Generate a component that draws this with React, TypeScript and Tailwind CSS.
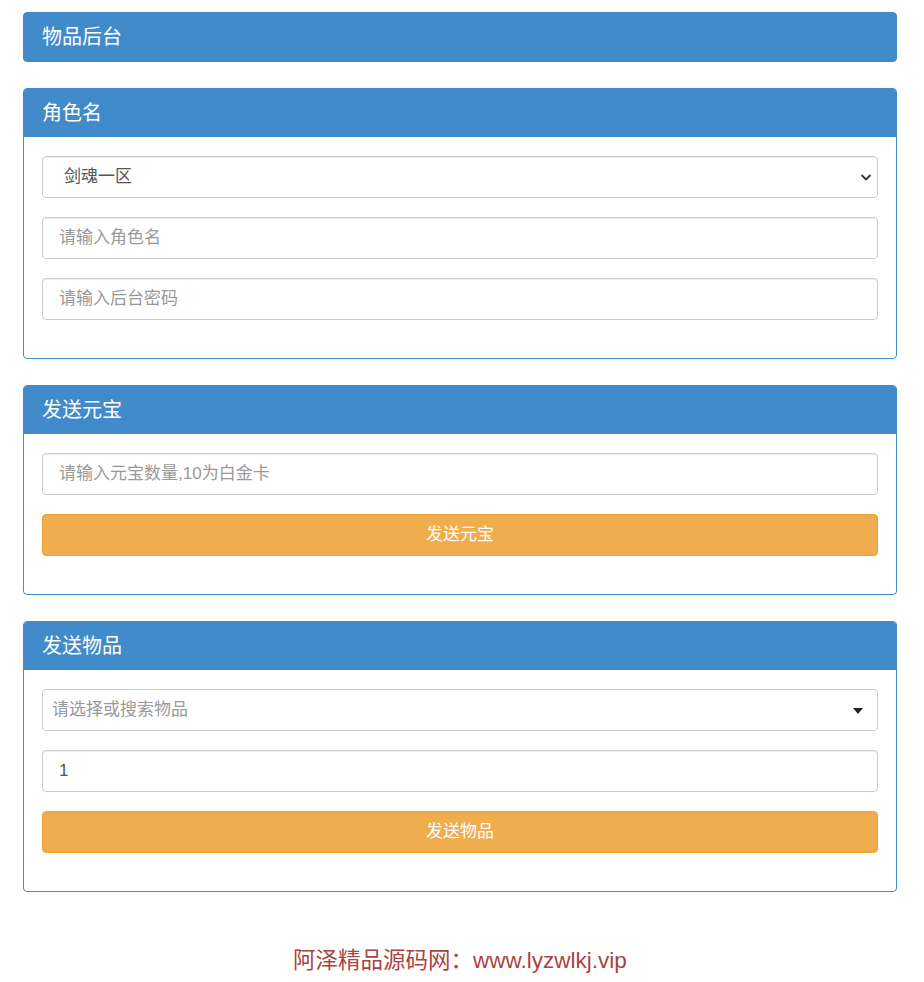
import React from 'react';

const font = { fontFamily: '"Liberation Sans", "Noto Sans CJK SC", sans-serif' };

const Panel: React.FC<{ title: string; children?: React.ReactNode }> = ({ title, children }) => (
  <div className="border border-[#428bca] rounded-[4px] overflow-hidden bg-white">
    <div className="h-[48px] bg-[#428bca] text-white text-[20px] flex items-center px-[18px]">{title}</div>
    <div className="px-[18px] pt-[19px] pb-[38px] flex flex-col gap-[19px]">{children}</div>
  </div>
);

const inputCls =
  'w-full h-[42px] border border-[#cccccc] rounded-[4px] px-[16px] text-[17px] text-[#555] placeholder:text-[#999] outline-none shadow-[inset_0_1px_1px_rgba(0,0,0,0.075)]';

const OrangeButton: React.FC<{ label: string }> = ({ label }) => (
  <button className="w-full h-[42px] rounded-[4px] bg-[#f0ad4e] border border-[#eea236] text-white text-[17px]">{label}</button>
);

export default function App() {
  return (
    <div style={font} className="min-h-[982px] bg-white pt-[12px] pl-[23px] pr-[27px] flex flex-col">
      <div className="h-[50px] bg-[#428bca] border border-[#428bca] rounded-[4px] text-white text-[20px] flex items-center px-[18px] mb-[26px]">
        物品后台
      </div>

      <div className="flex flex-col gap-[26px]">
        <Panel title="角色名">
          <div className="relative">
            <select className={inputCls + ' appearance-none bg-white pl-[21px] text-[#333]'} defaultValue="剑魂一区">
              <option>剑魂一区</option>
            </select>
            <svg className="absolute right-[6px] top-[15px] pointer-events-none" width="12" height="12" viewBox="0 0 12 12">
              <path d="M1.5 4 L6 8.5 L10.5 4" fill="none" stroke="#333" strokeWidth="1.8" />
            </svg>
          </div>
          <input className={inputCls} placeholder="请输入角色名" />
          <input className={inputCls} placeholder="请输入后台密码" />
        </Panel>

        <Panel title="发送元宝">
          <input className={inputCls} placeholder="请输入元宝数量,10为白金卡" />
          <OrangeButton label="发送元宝" />
        </Panel>

        <Panel title="发送物品">
          <div className="relative h-[42px] border border-[#cccccc] rounded-[4px] bg-white flex items-center pl-[9px] text-[17px] text-[#999]">
            请选择或搜索物品
            <svg className="absolute right-[14px] top-[18px]" width="10" height="6" viewBox="0 0 10 6">
              <path d="M0 0 L10 0 L5 6 Z" fill="#222" />
            </svg>
          </div>
          <input className={inputCls} defaultValue="1" />
          <OrangeButton label="发送物品" />
        </Panel>
      </div>

      <div className="mt-[52px] text-center text-[22.5px] text-[#a94442]">阿泽精品源码网：www.lyzwlkj.vip</div>
    </div>
  );
}
